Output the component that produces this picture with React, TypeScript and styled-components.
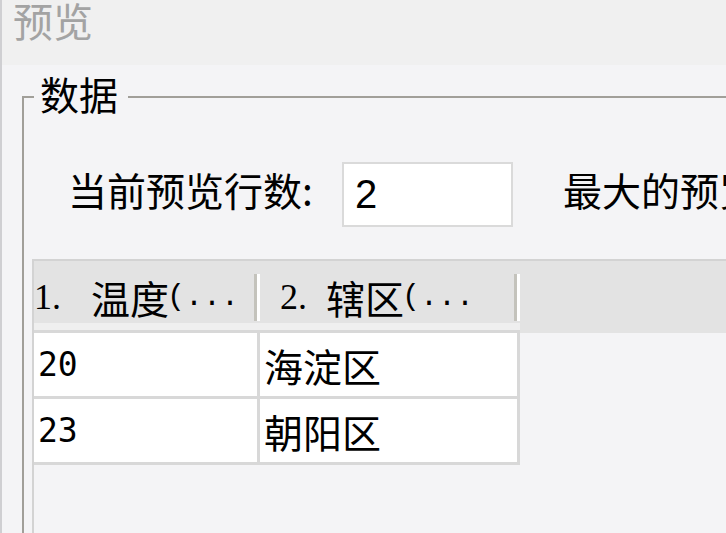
import React from 'react';
import styled, { createGlobalStyle } from 'styled-components';

// Type definitions
interface Column {
  id: string;
  index: string;
  name: string;
  width: number;
  lead: number;
  gap: number;
}

const GlobalStyle = createGlobalStyle`
  html, body {
    margin: 0;
    padding: 0;
    background: #f4f4f6;
  }
  body {
    font-family: "Noto Sans CJK SC", "Noto Sans", sans-serif;
  }
`;

const cjk = `"Noto Sans CJK SC", "Noto Sans", sans-serif`;

// Styled components
const Window = styled.div`
  width: 726px;
  height: 533px;
  overflow: hidden;
  box-sizing: border-box;
  border-left: 2px solid #cfcfd2;
  background: #f4f4f6;
  display: flex;
  flex-direction: column;
`;

const TitleBar = styled.div`
  height: 65px;
  flex-shrink: 0;
  background: #f0f0f0;
  padding-left: 11px;
  font-family: ${cjk};
  font-size: 40px;
  line-height: 41px;
  color: #a3a3a3;
`;

const GroupBox = styled.fieldset`
  margin: 5px 0 0 20px;
  padding: 38px 0 0 8px;
  min-width: 0;
  flex: 1;
  border: 2px solid #a19f99;
  border-right: none;
  border-bottom: none;
`;

const GroupLegend = styled.legend`
  margin-left: 2px;
  padding: 0 10px 7px 6px;
  font-family: ${cjk};
  font-size: 39px;
  line-height: 47px;
  color: #000;
`;

const ControlRow = styled.div`
  display: flex;
  align-items: center;
  height: 65px;
  white-space: nowrap;
`;

const FieldLabel = styled.span<{ $gap: number; $width?: number }>`
  flex-shrink: 0;
  margin-left: ${({ $gap }) => $gap}px;
  width: ${({ $width }) => ($width ? `${$width}px` : 'auto')};
  padding-bottom: 11px;
  font-family: ${cjk};
  font-size: 39px;
  line-height: 47px;
  color: #000;
`;

const RowsInput = styled.input`
  box-sizing: border-box;
  flex-shrink: 0;
  width: 171px;
  height: 65px;
  border: 2px solid #dadada;
  background: #fff;
  padding: 0 0 0 11px;
  font-family: "Liberation Sans", Arial, sans-serif;
  font-size: 40px;
  color: #000;
  outline: none;
`;

const GridBox = styled.div`
  margin-top: 32px;
  min-height: 320px;
  border-top: 2px solid #d3d3d3;
  border-left: 2px solid #d3d3d3;
`;

const HeaderRow = styled.div`
  display: flex;
  height: 72px;
  background: #e3e3e3;
`;

const HeaderCol = styled.div<{ $width: number }>`
  width: ${({ $width }) => $width}px;
  flex-shrink: 0;
  display: flex;
  flex-direction: column;
`;

const HeaderBody = styled.div`
  height: 62px;
  display: flex;
`;

const HeaderLabel = styled.div<{ $lead: number }>`
  flex: 1;
  display: flex;
  align-items: center;
  padding: 10px 0 0 ${({ $lead }) => $lead}px;
  white-space: nowrap;
  color: #000;
`;

const HeadIndex = styled.span`
  font-family: "Liberation Serif", "Times New Roman", serif;
  font-size: 36px;
  line-height: 47px;
`;

const HeadName = styled.span<{ $gap: number }>`
  margin-left: ${({ $gap }) => $gap}px;
  font-family: ${cjk};
  font-size: 39px;
  line-height: 47px;
`;

const HeadMore = styled.span`
  margin-left: -2px;
  font-family: "Liberation Mono", "Courier New", monospace;
  font-size: 30px;
  line-height: 47px;
`;

const Divider = styled.div`
  align-self: flex-end;
  margin-bottom: 2px;
  width: 3px;
  height: 47px;
  background: #c4c3bc;
  border-right: 3px solid #fff;
`;

const HeaderFoot = styled.div`
  height: 7px;
  background: #efefef;
  border-bottom: 3px solid #d8d8d8;
`;

const DataGrid = styled.div`
  display: grid;
  grid-template-columns: 223px 257px;
  grid-auto-rows: 63px;
  gap: 3px;
  width: fit-content;
  padding: 0 3px 3px 0;
  background: #d8d8d8;
`;

const DataCell = styled.div<{ $numeric?: boolean }>`
  display: flex;
  align-items: center;
  padding-left: 4px;
  background: #fff;
  color: #000;
  font-family: ${({ $numeric }) =>
    $numeric ? `"DejaVu Sans Mono", "Liberation Mono", monospace` : cjk};
  font-size: ${({ $numeric }) => ($numeric ? 33 : 39)}px;
`;

// Data
const columns: Column[] = [
  { id: 'temp', index: '1.', name: '温度', width: 226, lead: 0, gap: 30 },
  { id: 'district', index: '2.', name: '辖区', width: 260, lead: 20, gap: 19 },
];

const rows: string[][] = [
  ['20', '海淀区'],
  ['23', '朝阳区'],
];

// Main component
const App: React.FC = () => {
  return (
    <>
      <GlobalStyle />
      <Window>
        <TitleBar>预览</TitleBar>
        <GroupBox>
          <GroupLegend>数据</GroupLegend>
          <ControlRow>
            <FieldLabel $gap={36} $width={274}>当前预览行数:</FieldLabel>
            <RowsInput readOnly value="2" />
            <FieldLabel $gap={50}>最大的预览行数:</FieldLabel>
          </ControlRow>
          <GridBox>
            <HeaderRow>
              {columns.map((col) => (
                <HeaderCol key={col.id} $width={col.width}>
                  <HeaderBody>
                    <HeaderLabel $lead={col.lead}>
                      <HeadIndex>{col.index}</HeadIndex>
                      <HeadName $gap={col.gap}>{col.name}</HeadName>
                      <HeadMore>(...</HeadMore>
                    </HeaderLabel>
                    <Divider />
                  </HeaderBody>
                  <HeaderFoot />
                </HeaderCol>
              ))}
            </HeaderRow>
            <DataGrid>
              {rows.map((row, r) =>
                row.map((value, c) => (
                  <DataCell key={`${r}-${c}`} $numeric={c === 0}>
                    {value}
                  </DataCell>
                ))
              )}
            </DataGrid>
          </GridBox>
        </GroupBox>
      </Window>
    </>
  );
};

export default App;
